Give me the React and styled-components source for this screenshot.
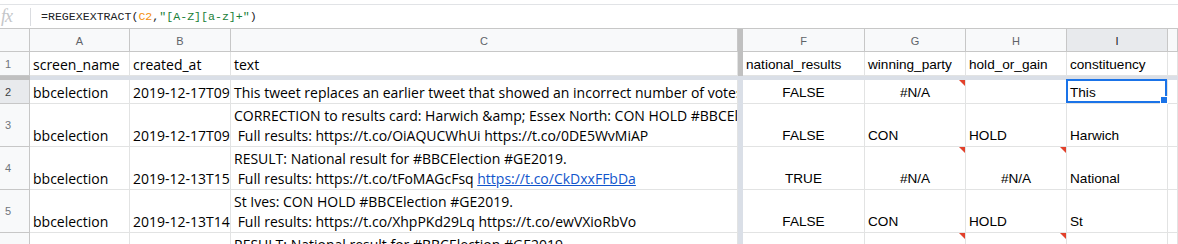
import React from "react";
import styled, { createGlobalStyle, css } from "styled-components";

const GlobalStyle = createGlobalStyle`
  html, body {
    margin: 0;
    padding: 0;
    background: #fff;
    overflow: hidden;
  }
  body {
    font-family: "Liberation Sans", Arial, sans-serif;
  }
`;

const COLS = "30px 100px 101px 507px 5px 122px 101px 101px 101px 1fr";
const CALIBRI = `"Open Sans", "Liberation Sans", sans-serif`;
const ARIAL = `"Liberation Sans", Arial, sans-serif`;

const Page = styled.div`
  width: 1178px;
  height: 244px;
  overflow: hidden;
  background: #fff;
`;

/* formula bar */
const FormulaBar = styled.div`
  margin-top: 4px;
  height: 25px;
  border-top: 1px solid #e1e3e6;
  border-bottom: 1px solid #c7c7c7;
  box-sizing: border-box;
  display: flex;
  align-items: center;
`;

const FxMark = styled.span`
  width: 29px;
  padding-left: 1px;
  font-family: "Liberation Serif", serif;
  font-style: italic;
  font-size: 18px;
  color: #c4c6c9;
  letter-spacing: -1px;
`;

const FxDivider = styled.span`
  width: 1px;
  height: 18px;
  background: #dadce0;
  margin-right: 10px;
`;

const Formula = styled.span`
  font-family: "Liberation Mono", monospace;
  font-size: 11.6px;
  color: #202124;
  white-space: pre;
`;

const Tok = styled.span`
  color: ${(p) => (p.$kind === "ref" ? "#f4900c" : p.$kind === "str" ? "#188038" : "#202124")};
`;

/* grid */
const Row = styled.div`
  display: grid;
  grid-template-columns: ${COLS};
  height: ${(p) => p.$h}px;
`;

const ColHead = styled.div`
  box-sizing: border-box;
  border-right: 1px solid #c7c7c7;
  border-bottom: 1px solid #c7c7c7;
  background: ${(p) => (p.$active ? "#e8eaed" : "#f8f9fa")};
  color: ${(p) => (p.$active ? "#202124" : "#5f6368")};
  font-family: ${ARIAL};
  font-size: 11px;
  display: flex;
  align-items: center;
  justify-content: center;
  padding-top: 1px;
`;

const Corner = styled(ColHead)`
  background: #f8f9fa;
`;

const RowHead = styled.div`
  box-sizing: border-box;
  border-right: 1px solid #c7c7c7;
  border-bottom: 1px solid #c7c7c7;
  background: ${(p) => (p.$active ? "#e8eaed" : "#f8f9fa")};
  color: ${(p) => (p.$active ? "#3c4043" : "#70757a")};
  font-family: ${ARIAL};
  font-size: 11px;
  display: flex;
  align-items: center;
  padding-left: 5px;
`;

const FreezeV = styled.div`
  background: ${(p) => (p.$head ? "#c0c0c0" : "#dadfe7")};
`;

const FreezeH = styled.div`
  display: grid;
  grid-template-columns: 30px 1fr;
  height: 4px;
`;

const FreezeHHead = styled.div`
  background: #c0c0c0;
`;

const FreezeHBody = styled.div`
  background: #dadfe7;
`;

const Cell = styled.div`
  position: relative;
  box-sizing: border-box;
  border-right: 1px solid #e2e3e3;
  border-bottom: 1px solid #e2e3e3;
  overflow: hidden;
  display: flex;
  flex-direction: column;
  justify-content: flex-end;
  align-items: ${(p) => (p.$align === "center" ? "center" : "flex-start")};
  white-space: pre;
  color: #000;
  ${(p) =>
    p.$font === "arial"
      ? css`
          padding: 0 3px 2px 3px;
          font-family: ${ARIAL};
          font-size: 13.6px;
          line-height: 17px;
        `
      : css`
          padding: 0 3px 0 3px;
          font-family: ${CALIBRI};
          font-size: 14px;
          line-height: 20px;
        `}
`;

const Line = styled.div`
  white-space: pre;
`;

const Link = styled.span`
  color: #1155cc;
  text-decoration: underline;
`;

const Tri = styled.span`
  position: absolute;
  top: 0;
  right: 0;
  width: 0;
  height: 0;
  border-top: 6px solid #e2412b;
  border-left: 6px solid transparent;
`;

const Selection = styled.span`
  position: absolute;
  inset: -1px 0 0 -1px;
  border: 2px solid #1a73e8;
  pointer-events: none;
`;

const Handle = styled.span`
  position: absolute;
  right: -3px;
  bottom: -3px;
  width: 6px;
  height: 6px;
  background: #1a73e8;
  border: 1px solid #fff;
  box-sizing: content-box;
`;

const SelCell = styled(Cell)`
  overflow: visible;
  z-index: 2;
`;

const headers = [
  { l: "A" },
  { l: "B" },
  { l: "C" },
  null,
  { l: "F" },
  { l: "G" },
  { l: "H" },
  { l: "I", active: true },
];

const rows = [
  {
    n: 2,
    h: 24,
    active: true,
    a: "bbcelection",
    b: "2019-12-17T09",
    c: ["This tweet replaces an earlier tweet that showed an incorrect number of votes"],
    f: "FALSE",
    g: { t: "#N/A", center: true, tri: true },
    h2: { t: "" },
    i: { t: "This", sel: true },
  },
  {
    n: 3,
    h: 43,
    a: "bbcelection",
    b: "2019-12-17T09",
    c: [
      "CORRECTION to results card: Harwich &amp; Essex North: CON HOLD #BBCElection #GE2019.",
      " Full results: https://t.co/OiAQUCWhUi https://t.co/0DE5WvMiAP",
    ],
    f: "FALSE",
    g: { t: "CON" },
    h2: { t: "HOLD" },
    i: { t: "Harwich" },
  },
  {
    n: 4,
    h: 43,
    a: "bbcelection",
    b: "2019-12-13T15",
    c: [
      "RESULT: National result for #BBCElection #GE2019.",
      [" Full results: https://t.co/tFoMAGcFsq ", "https://t.co/CkDxxFFbDa"],
    ],
    f: "TRUE",
    g: { t: "#N/A", center: true, tri: true },
    h2: { t: "#N/A", center: true, tri: true },
    i: { t: "National" },
  },
  {
    n: 5,
    h: 43,
    a: "bbcelection",
    b: "2019-12-13T14",
    c: [
      "St Ives: CON HOLD #BBCElection #GE2019.",
      " Full results: https://t.co/XhpPKd29Lq https://t.co/ewVXioRbVo",
    ],
    f: "FALSE",
    g: { t: "CON" },
    h2: { t: "HOLD" },
    i: { t: "St" },
  },
  {
    n: 6,
    h: 43,
    a: "bbcelection",
    b: "2019-12-13T14",
    c: [
      "RESULT: National result for #BBCElection #GE2019.",
      " Full results: https://t.co/Xq2mTR0mPu https://t.co/PuV5IY1ZLn",
    ],
    f: "TRUE",
    g: { t: "#N/A", center: true, tri: true },
    h2: { t: "#N/A", center: true, tri: true },
    i: { t: "National" },
  },
];

function ArialCell({ d }) {
  const Comp = d.sel ? SelCell : Cell;
  return (
    <Comp $font="arial" $align={d.center ? "center" : "left"}>
      {d.t}
      {d.tri && <Tri />}
      {d.sel && (
        <Selection>
          <Handle />
        </Selection>
      )}
    </Comp>
  );
}

export default function App() {
  return (
    <Page>
      <GlobalStyle />
      <FormulaBar>
        <FxMark>fx</FxMark>
        <FxDivider />
        <Formula>
          <Tok>=REGEXEXTRACT(</Tok>
          <Tok $kind="ref">C2</Tok>
          <Tok>,</Tok>
          <Tok $kind="str">"[A-Z][a-z]+"</Tok>
          <Tok>)</Tok>
        </Formula>
      </FormulaBar>

      <Row $h={23}>
        <Corner />
        {headers.map((h, i) =>
          h ? (
            <ColHead key={i} $active={h.active}>
              {h.l}
            </ColHead>
          ) : (
            <FreezeV key={i} $head />
          )
        )}
        <ColHead />
      </Row>

      <Row $h={24}>
        <RowHead>1</RowHead>
        <Cell>screen_name</Cell>
        <Cell>created_at</Cell>
        <Cell>text</Cell>
        <FreezeV $head />
        <Cell $font="arial">national_results</Cell>
        <Cell $font="arial">winning_party</Cell>
        <Cell $font="arial">hold_or_gain</Cell>
        <Cell $font="arial">constituency</Cell>
        <Cell />
      </Row>

      <FreezeH>
        <FreezeHHead />
        <FreezeHBody />
      </FreezeH>

      {rows.map((r) => (
        <Row key={r.n} $h={r.h}>
          <RowHead $active={r.active}>{r.n}</RowHead>
          <Cell>{r.a}</Cell>
          <Cell>{r.b}</Cell>
          <Cell>
            {r.c.map((line, k) =>
              Array.isArray(line) ? (
                <Line key={k}>
                  {line[0]}
                  <Link>{line[1]}</Link>
                </Line>
              ) : (
                <Line key={k}>{line}</Line>
              )
            )}
          </Cell>
          <FreezeV />
          <Cell $font="arial" $align="center">
            {r.f}
          </Cell>
          <ArialCell d={r.g} />
          <ArialCell d={r.h2} />
          <ArialCell d={r.i} />
          <Cell />
        </Row>
      ))}
    </Page>
  );
}
